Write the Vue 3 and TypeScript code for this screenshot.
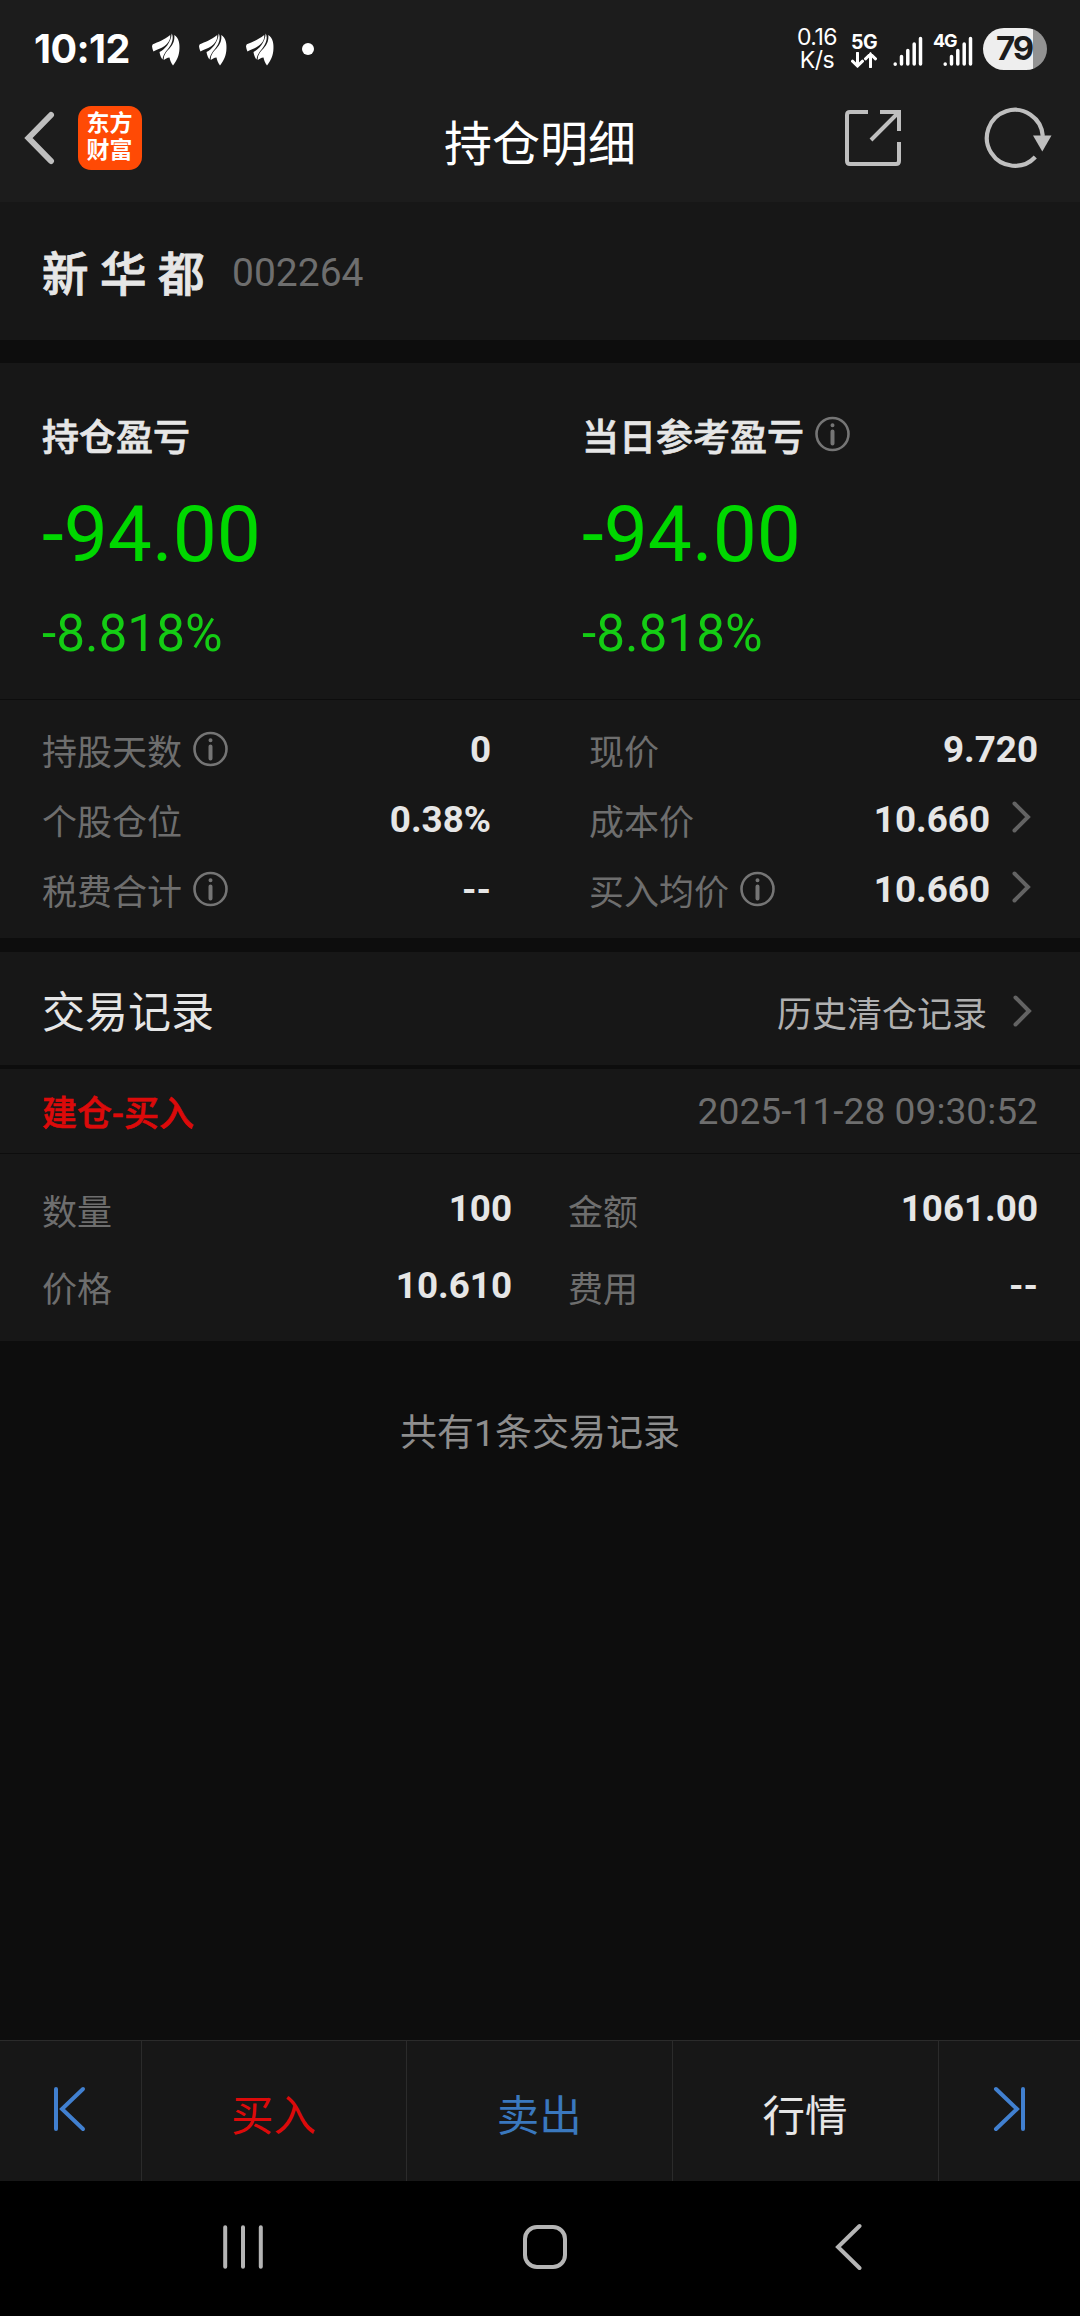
<script setup lang="ts">
interface Metric {
  label: string
  value: string
  info?: boolean
  link?: boolean
}

const totals = [
  { title: '持仓盈亏', amount: '-94.00', percent: '-8.818%', info: false },
  { title: '当日参考盈亏', amount: '-94.00', percent: '-8.818%', info: true },
]

const metrics: Metric[] = [
  { label: '持股天数', value: '0', info: true },
  { label: '现价', value: '9.720' },
  { label: '个股仓位', value: '0.38%' },
  { label: '成本价', value: '10.660', link: true },
  { label: '税费合计', value: '--', info: true },
  { label: '买入均价', value: '10.660', info: true, link: true },
]

const trade: Metric[] = [
  { label: '数量', value: '100' },
  { label: '金额', value: '1061.00' },
  { label: '价格', value: '10.610' },
  { label: '费用', value: '--' },
]
</script>

<template>
  <div class="screen">
    <div class="status">
      <span class="clock">10:12</span>
      <svg v-for="n in 3" :key="n" class="wing" width="28" height="33" viewBox="0 0 28 33">
        <path d="M0 13L.8 11.200C6 9 12 7 18.200 2C19 8 14 13 8 15.500C5.500 16.500 3 17.500 1.500 18.500C.8 17 .2 15 0 13Z" />
        <path d="M19.700 .5C21.800 4 20.500 10 17 14.500C14 18.500 11.500 21 10.500 26.500C9 25 8 22 7.500 19C12.500 16.500 19 10 19.700 .5Z" />
        <path d="M22.300 2C27 5 28 11 27.300 18C26.500 25 23.500 29 21 32.500C19 30 18 27 17.500 24.500C15 24.500 13.500 26 11.700 27C11.700 22 14 19 17.500 15.500C21.500 11 22.800 7 22.300 2Z" />
      </svg>
      <span class="dot"></span>
      <span class="speed">0.16<br>K/s</span>
      <span class="net">
        <span class="gen">5G</span>
        <svg width="26" height="16" viewBox="0 0 26 16">
          <path d="M6.500 1V14M1.500 9.200L6.500 14L11.500 9.200M19.500 15V2M14.500 6.800L19.500 2L24.500 6.800" />
        </svg>
      </span>
      <svg class="signal first" width="30" height="34" viewBox="0 0 30 34">
        <path d="M2.200 30.200V30M8.500 30V22.500M14.800 30V16.500M21.200 30V10M27.500 30V4.500" />
      </svg>
      <span class="second">
        <span class="gen4">4G</span>
        <svg class="signal" width="30" height="34" viewBox="0 0 30 34">
          <path d="M2.200 30.200V30M8.500 30V22.500M14.800 30V16.500M21.200 30V10M27.500 30V4.500" />
        </svg>
      </span>
      <span class="battery">79</span>
    </div>

    <header class="header">
      <svg class="back" width="32" height="54" viewBox="0 0 32 54">
        <path d="M27 4L4.500 27L27 50" />
      </svg>
      <span class="logo">东方<br>财富</span>
      <h1>持仓明细</h1>
      <svg class="share" width="56" height="56" viewBox="0 0 56 56">
        <path d="M23 2H5Q2 2 2 5V51Q2 54 5 54H51Q54 54 54 51V32M35 2H54V21M53 3L26 30" />
      </svg>
      <svg class="refresh" width="70" height="62" viewBox="0 0 70 62">
        <path class="arc" d="M58.800 29A28 28 0 1 0 51.300 50" />
        <path class="tip" d="M49 28.500H67.500L58.300 44.500Z" />
      </svg>
    </header>

    <section class="stock">
      <span class="name">新 华 都</span>
      <span class="code">002264</span>
    </section>

    <section class="totals">
      <div v-for="t in totals" :key="t.title" class="total">
        <div class="total-title">
          <span>{{ t.title }}</span>
          <svg v-if="t.info" class="info" width="35" height="36" viewBox="0 0 35 36">
            <circle cx="17.500" cy="18" r="16" /><path d="M17.500 9.200V9.210M17.500 15.500V27.500" />
          </svg>
        </div>
        <div class="amount">{{ t.amount }}</div>
        <div class="percent">{{ t.percent }}</div>
      </div>
    </section>

    <section class="metrics">
      <div v-for="m in metrics" :key="m.label" class="metric">
        <span class="label">{{ m.label }}</span>
        <svg v-if="m.info" class="info" width="35" height="36" viewBox="0 0 35 36">
          <circle cx="17.500" cy="18" r="16" /><path d="M17.500 9.200V9.210M17.500 15.500V27.500" />
        </svg>
        <span class="value">{{ m.value }}</span>
        <svg v-if="m.link" class="chevron" width="19" height="32" viewBox="0 0 19 32">
          <path d="M2.500 2.500L16 16L2.500 29.500" />
        </svg>
      </div>
    </section>

    <section class="records">
      <h2>交易记录</h2>
      <span class="history">历史清仓记录</span>
      <svg class="chevron" width="19" height="32" viewBox="0 0 19 32">
        <path d="M2.500 2.500L16 16L2.500 29.500" />
      </svg>
    </section>

    <section class="trade-head">
      <span class="kind">建仓-买入</span>
      <time>2025-11-28 09:30:52</time>
    </section>

    <section class="trade">
      <div v-for="m in trade" :key="m.label" class="metric">
        <span class="label">{{ m.label }}</span>
        <span class="value">{{ m.value }}</span>
      </div>
    </section>

    <p class="count">共有1条交易记录</p>

    <nav class="actions">
      <button class="edge first-page">
        <svg width="34" height="48" viewBox="0 0 34 48"><path d="M4 4V44M31 4L10 24L31 44" /></svg>
      </button>
      <button class="buy">买入</button>
      <button class="sell">卖出</button>
      <button class="quote">行情</button>
      <button class="edge last-page">
        <svg width="34" height="48" viewBox="0 0 34 48"><path d="M30 4V44M3 4L24 24L3 44" /></svg>
      </button>
    </nav>

    <div class="system">
      <svg class="recents" width="40" height="48" viewBox="0 0 40 48"><path d="M2.200 4.300V43.700M20 4.300V43.700M37.800 4.300V43.700" /></svg>
      <svg class="home" width="46" height="48" viewBox="0 0 46 48"><rect x="3" y="4" width="40" height="40" rx="12" /></svg>
      <svg class="prev" width="28" height="48" viewBox="0 0 28 48"><path d="M25.500 3L4 24L25.500 45" /></svg>
    </div>
  </div>
</template>

<style>
body {
  background: #0d0d0d;
}
</style>

<style scoped>
* {
  box-sizing: border-box;
}
.screen {
  display: flex;
  flex-direction: column;
  width: 1080px;
  height: 2316px;
  overflow: hidden;
  background: #0d0d0d;
  color: #e6e6e6;
  font-family: Roboto, "Noto Sans CJK SC", sans-serif;
  white-space: nowrap;
}
svg {
  display: block;
  flex: none;
  fill: none;
  stroke-linecap: round;
}
h1,
h2,
p {
  margin: 0;
  font-weight: 400;
}

.status {
  display: flex;
  align-items: flex-start;
  height: 98px;
  padding-left: 34px;
  background: #1c1c1c;
  color: #fff;
  font-family: Inter, sans-serif;
}
.clock {
  width: 118px;
  margin-top: 27px;
  font-size: 39.500px;
  font-weight: 700;
  line-height: 44px;
  letter-spacing: -0.600px;
}
.wing {
  margin: 33px 19px 0 0;
  fill: #fff;
}
.dot {
  width: 12px;
  height: 12px;
  margin: 43px 0 0 9px;
  border-radius: 50%;
  background: #fff;
}
.speed {
  width: 48px;
  margin: 26px 0 0 479px;
  font-size: 23px;
  line-height: 23px;
  letter-spacing: -0.500px;
  text-align: center;
}
.net {
  width: 26px;
  margin: 32px 0 0 10px;
  stroke: #fff;
  stroke-width: 3;
}
.gen {
  display: block;
  font-size: 19.500px;
  font-weight: 700;
  line-height: 20px;
  text-align: center;
  letter-spacing: -0.500px;
  stroke: none;
}
.signal {
  stroke: #fff;
  stroke-width: 3.500;
}
.first {
  margin: 34px 0 0 16px;
}
.second {
  display: flex;
  position: relative;
  margin: 34px 0 0 20px;
}
.gen4 {
  position: absolute;
  left: -10px;
  top: -3px;
  font-size: 18px;
  font-weight: 700;
  line-height: 20px;
  letter-spacing: -1.200px;
}
.battery {
  width: 64px;
  height: 42px;
  margin: 28px 0 0 10px;
  padding-left: 13px;
  border-radius: 21px;
  background: linear-gradient(90deg, #eee 50px, #929292 50px);
  color: #1c1c1c;
  font-size: 33px;
  font-weight: 700;
  line-height: 41px;
  letter-spacing: -2px;
}

.header {
  display: flex;
  align-items: center;
  height: 104px;
  padding: 0 26px 24px 24px;
  background: #1c1c1c;
}
.back {
  stroke: #bfbfbf;
  stroke-width: 6;
}
.logo {
  width: 64px;
  height: 64px;
  margin-left: 21.500px;
  padding-top: 4px;
  border-radius: 13px;
  background: #ff4a05;
  color: #fff;
  font-size: 23px;
  font-weight: 700;
  line-height: 27px;
  text-align: center;
}
h1 {
  flex: 1;
  padding: 13px 0 0 93.500px;
  text-align: center;
  color: #fff;
  font-size: 48px;
  line-height: 60px;
}
.share {
  margin-right: 83px;
  stroke: #bfbfbf;
  stroke-width: 4;
  stroke-linecap: butt;
}
.refresh {
  stroke-linecap: butt;
}
.arc {
  stroke: #bfbfbf;
  stroke-width: 4.200;
}
.tip {
  fill: #bfbfbf;
}

.stock {
  display: flex;
  align-items: center;
  height: 138px;
  padding-left: 42px;
  background: #171717;
}
.name {
  width: 161px;
  padding-top: 8px;
  font-size: 46.500px;
  font-weight: 500;
  line-height: 60px;
  -webkit-text-stroke: 0.900px currentColor;
}
.code {
  margin-left: 29px;
  padding-top: 3px;
  color: #6e6e6e;
  font-size: 39px;
}

.totals {
  display: flex;
  height: 336px;
  margin-top: 23px;
  background: #171717;
}
.total {
  width: 540px;
  padding: 46px 0 0 42px;
}
.total-title {
  display: flex;
  height: 60px;
  font-size: 37px;
  font-weight: 500;
  line-height: 60px;
}
.total-title span {
  -webkit-text-stroke: 0.700px currentColor;
}
.total-title .info {
  margin: 7px 0 0 11px;
}
.info {
  stroke: #757575;
  stroke-width: 2.600;
}
.info path {
  stroke-width: 4;
}
.amount {
  margin-top: 20px;
  color: #00d800;
  font-size: 78.500px;
  line-height: 90px;
}
.percent {
  margin-top: 25px;
  color: #14cc14;
  font-size: 51.300px;
  line-height: 60px;
}

.metrics {
  display: grid;
  grid-template-columns: 449px 449px;
  grid-template-rows: repeat(3, 70px);
  column-gap: 98px;
  height: 238px;
  margin-top: 1px;
  padding: 14px 41px 14px 42px;
  background: #171717;
}
.metric {
  display: flex;
  align-items: center;
}
.label {
  padding-top: 10px;
  color: #6e6e6e;
  font-size: 35px;
  line-height: 48px;
}
.metric .info {
  margin-left: 10.500px;
}
.value {
  margin-left: auto;
  padding-top: 1px;
  font-size: 36.800px;
  font-weight: 700;
  line-height: 48px;
}
.chevron {
  margin: 0 7px 4px 22px;
  stroke: #636363;
  stroke-width: 4;
}

.records {
  display: flex;
  align-items: center;
  height: 113px;
  margin-top: 14px;
  padding: 0 42px;
  background: #171717;
}
h2 {
  padding-top: 9px;
  font-size: 43px;
  line-height: 60px;
}
.history {
  margin-left: auto;
  padding-top: 14px;
  color: #b0b0b0;
  font-size: 35px;
  line-height: 48px;
}
.records .chevron {
  margin: 5px 6px 0 26px;
}

.trade-head {
  display: flex;
  align-items: center;
  justify-content: space-between;
  height: 84px;
  margin-top: 4px;
  padding: 0 42px;
  background: #171717;
}
.kind {
  padding-top: 8px;
  color: #dc0a0a;
  font-size: 35px;
  font-weight: 500;
  line-height: 48px;
  -webkit-text-stroke: 0.600px currentColor;
}
time {
  color: #6e6e6e;
  font-size: 37.200px;
}

.trade {
  display: grid;
  grid-template-columns: 470px 470px;
  grid-template-rows: 77px 77px;
  column-gap: 56px;
  height: 187px;
  margin-top: 1px;
  padding: 16px 41px 0 42px;
  background: #171717;
}

.count {
  flex: 1;
  padding-top: 63px;
  color: #8e8e8e;
  font-size: 37px;
  line-height: 60px;
  text-align: center;
}

.actions {
  display: flex;
  height: 141px;
  border-top: 1px solid #2b2b2b;
  background: #171717;
}
button {
  flex: 1;
  padding: 11px 1px 0 0;
  border: 0;
  border-right: 1px solid #2b2b2b;
  background: none;
  font-family: inherit;
  font-size: 42.500px;
  line-height: 60px;
}
.edge {
  display: flex;
  flex: none;
  align-items: center;
  justify-content: center;
  width: 141.500px;
  padding: 0 3px 4px 0;
  stroke: #4180d0;
  stroke-width: 4;
}
.last-page {
  width: 141px;
  padding: 0 0 4px 1px;
  border-right: 0;
}
.buy {
  color: #dc0a0a;
}
.sell {
  color: #3a78be;
}
.quote {
  color: #e6e6e6;
}

.system {
  display: flex;
  align-items: flex-start;
  height: 135px;
  padding: 42px 0 0 223px;
  background: #000;
  stroke: #b5b5b5;
  stroke-width: 4;
}
.home {
  margin-left: 259px;
}
.prev {
  margin-left: 266px;
}
</style>
